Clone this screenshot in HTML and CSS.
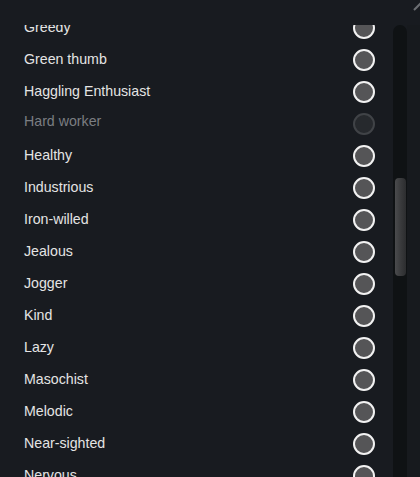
FILE: index.html
```html
<!DOCTYPE html>
<html>
<head>
<meta charset="utf-8">
<link rel="stylesheet" href="styles.css">
</head>
<body>
<div class="panel">
  <div class="top">
    <svg class="grip" width="12" height="12" viewBox="0 0 12 12"><line x1="3" y1="10" x2="11" y2="2" stroke="#6b6e72" stroke-width="2"/></svg>
  </div>
  <div class="body">
    <div class="viewport">
      <ul class="list">
        <li class="row"><span>Greedy</span><i class="radio"></i></li>
        <li class="row"><span>Green thumb</span><i class="radio"></i></li>
        <li class="row"><span>Haggling Enthusiast</span><i class="radio"></i></li>
        <li class="row disabled"><span>Hard worker</span><i class="radio"></i></li>
        <li class="row"><span>Healthy</span><i class="radio"></i></li>
        <li class="row"><span>Industrious</span><i class="radio"></i></li>
        <li class="row"><span>Iron-willed</span><i class="radio"></i></li>
        <li class="row"><span>Jealous</span><i class="radio"></i></li>
        <li class="row"><span>Jogger</span><i class="radio"></i></li>
        <li class="row"><span>Kind</span><i class="radio"></i></li>
        <li class="row"><span>Lazy</span><i class="radio"></i></li>
        <li class="row"><span>Masochist</span><i class="radio"></i></li>
        <li class="row"><span>Melodic</span><i class="radio"></i></li>
        <li class="row"><span>Near-sighted</span><i class="radio"></i></li>
        <li class="row"><span>Nervous</span><i class="radio"></i></li>
      </ul>
    </div>
    <div class="track"><div class="thumb"></div></div>
    <div class="gutter"></div>
  </div>
</div>
</body>
</html>
```
FILE: styles.css
```css
html, body {
  margin: 0;
  padding: 0;
  background: #181b20;
  height: 100%;
  overflow: hidden;
}
.panel {
  display: flex;
  flex-direction: column;
  height: 477px;
  font-family: "Liberation Sans", Arial, sans-serif;
  font-size: 14.2px;
  color: #e4e4e4;
}
.top {
  height: 25px;
  flex: none;
  position: relative;
}
.grip {
  position: absolute;
  right: -3px;
  top: 0;
}
.body {
  flex: 1;
  display: flex;
  min-height: 0;
}
.viewport {
  flex: 1;
  overflow: hidden;
}
.list {
  list-style: none;
  margin: -13px 0 0 0;
  padding: 0 18px 0 24px;
}
.row {
  height: 32px;
  display: flex;
  align-items: center;
  justify-content: space-between;
}
.row span {
  padding-bottom: 2px;
}
.row.disabled {
  color: #7b7e82;
}
.row.disabled span {
  padding-bottom: 6px;
}
.radio {
  width: 18px;
  height: 18px;
  border: 2px solid #f2f2f2;
  border-radius: 50%;
  background: #555557;
}
.row.disabled .radio {
  border-color: #404347;
  background: #26292d;
}
.track {
  width: 14px;
  flex: none;
  background: #0f1214;
  border-radius: 7px 7px 0 0;
  padding: 153px 1px 0 2px;
  box-sizing: border-box;
}
.thumb {
  height: 98px;
  border-radius: 4px;
  background: linear-gradient(to right, #4a4b4d, #3a3b3d 50%, #2c2d2f);
}
.gutter {
  width: 13px;
  flex: none;
  background: #171a1e;
}
```
